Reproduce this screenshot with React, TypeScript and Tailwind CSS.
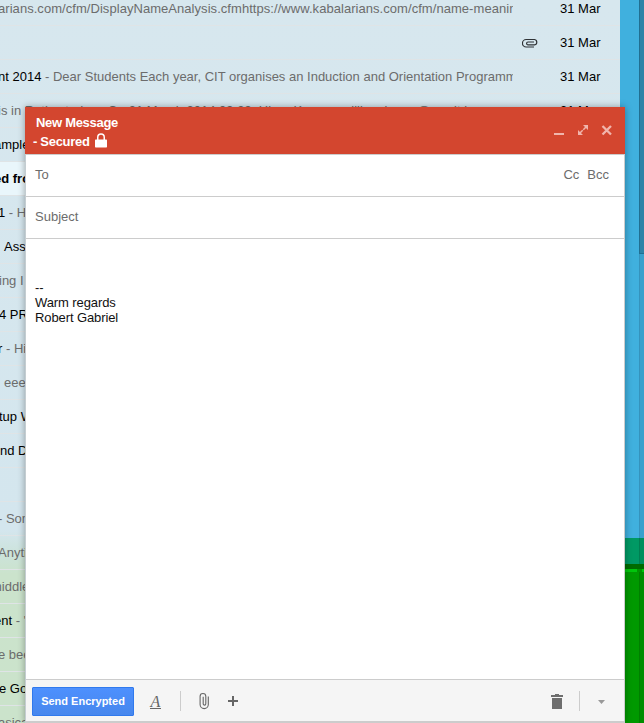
import type { ReactNode } from 'react';

type Row = { left: ReactNode; date?: boolean; clip?: boolean; unread?: boolean; shift: string };

const rows: Row[] = [
  { left: 'arians.com/cfm/DisplayNameAnalysis.cfmhttps://www.kabalarians.com/cfm/name-meaning', date: true, shift: '-ml-[2px] tracking-[0.05px]' },
  { left: '', date: true, clip: true, shift: '' },
  { left: <><b className="font-normal text-black">nt 2014</b> - Dear Students Each year, CIT organises an Induction and Orientation Programme</>, date: true, shift: '-ml-[2px]' },
  { left: 'is in Rathcstudsm. On 31 March 2014 09:39, Hiran Kansar  william.byrne@mycit.ie', date: true, shift: '-ml-[2px]' },
  { left: <b className="font-normal text-black">ample</b>, shift: '-ml-[6px]' },
  { left: <b className="text-black">ed from</b>, unread: true, shift: '-ml-[6px]' },
  { left: <><b className="font-normal text-black">1</b> - Hi</>, shift: '-ml-[2px]' },
  { left: <b className="font-normal text-black">Assign</b>, shift: 'ml-[4px]' },
  { left: 'ing I', shift: '-ml-[1px]' },
  { left: <b className="font-normal text-black">4 PRO</b>, shift: '-ml-[1px]' },
  { left: <><b className="font-normal text-black">r</b> - Hi</>, shift: '-ml-[2px]' },
  { left: 'eeee', shift: 'ml-[4px]' },
  { left: <b className="font-normal text-black">tup W</b>, shift: '-ml-[1px]' },
  { left: <b className="font-normal text-black">nd De</b>, shift: 'ml-0' },
  { left: '', shift: '' },
  { left: '- Som', shift: '-ml-[2px]' },
  { left: 'Anyti', shift: '-ml-[2px]' },
  { left: 'middle', shift: '-ml-[9px]' },
  { left: <><b className="font-normal text-black">ent</b> - "</>, shift: '-ml-[6px]' },
  { left: 'e been', shift: '-ml-[2px]' },
  { left: <b className="font-normal text-black">e Goo</b>, shift: '-ml-[1px]' },
  { left: 'asical', shift: '-ml-[2px]' },
];

export default function App() {
  return (
    <div className="relative h-[723px] w-[644px] overflow-hidden font-['Liberation_Sans',Arial,sans-serif] text-[13px] text-[#6c6c6c]">
      <div className="flex h-full">
        <div className="h-full w-[620px] overflow-hidden bg-[linear-gradient(#d7e7ee_0px,#d4e6ee_530px,#cce3dc_552px,#cbe3cc_574px,#cbe3cb_723px)]">
          <div className="-mt-2">
            {rows.map((r, i) => (
              <div key={i} className={`flex h-[34px] items-center border-b border-[#dfe4e6] whitespace-pre ${r.unread ? 'bg-[#e9f6fb]' : ''}`}>
                <div className="w-[513px] overflow-hidden leading-[18px]"><div className={r.shift}>{r.left}</div></div>
                <div className="flex w-[47px] items-center pt-px pl-[9px]">{r.clip && <Clip />}</div>
                {r.date && <div className="text-black">31 Mar</div>}
              </div>
            ))}
          </div>
        </div>
        <div className="flex h-full w-6 flex-col">
          <div className="flex h-[538px] bg-[#40b0de]">
            <div className="w-[19px]" />
            <div className="flex w-[5px] flex-col">
              <div className="h-[254px] border-b border-l border-[#216f91] bg-[#2d83a7]" />
              <div className="flex-1 border-l border-[#3593bd] bg-[#39a1cd]" />
            </div>
          </div>
          <div className="flex h-[26px] bg-[#009964] pl-[19px]"><div className="flex-1 border-l border-[#007f52] bg-[#008f5d]" /></div>
          <div className="h-[5px] bg-[#006c00]" />
          <div className="flex h-[3px] bg-[#00c60c]"><div className="ml-[17px] w-[5px] bg-[#009400]" /></div>
          <div className="flex flex-1 bg-[#009900] pl-[19px]"><div className="flex-1 border-l border-[#007f00] bg-[#008d00]" /></div>
        </div>
      </div>
      <section className="absolute top-[107px] left-[25px] flex h-[616px] w-[600px] flex-col shadow-[0_0_7px_rgba(0,0,0,0.35)]">
        <header className="flex h-[47px] bg-[#d3462f] text-white">
          <div className="flex-1 pt-[6px] font-bold leading-[19px] tracking-[-0.3px]">
            <div className="pl-[11px]">New Message</div>
            <div className="flex pl-2">- Secured <Lock /></div>
          </div>
          <Controls />
        </header>
        <div className="flex flex-1 flex-col border-x border-t border-r-[#ccc] border-l-[#c4cdd1] border-t-[#ccc] bg-white">
          <div className="flex h-[42px] justify-between border-b border-[#ccc] pt-[11px] pr-[15px] pl-[9px] leading-[17px]">
            <span>To</span><span className="flex gap-2"><span>Cc</span><span>Bcc</span></span>
          </div>
          <div className="h-[42px] border-b border-[#ccc] pt-[11px] pl-[9px] leading-[17px]">Subject</div>
          <div className="flex-1 pt-[41px] pl-[9px] leading-[15px] tracking-[-0.1px] text-[#111]">
            <div>--</div><div>Warm regards</div><div>Robert Gabriel</div>
          </div>
          <footer className="flex h-[44px] items-start border-t border-b-2 border-[#ccc] bg-[#f5f5f5] pt-[7px] pl-[6px]">
            <button className="h-[29px] w-[102px] rounded-[1px] border border-[#3079ed] bg-linear-to-b from-[#4d90fe] to-[#4787ed] text-[11px] font-bold whitespace-nowrap text-white">Send Encrypted</button>
            <FooterIcons />
            <Trash />
          </footer>
        </div>
      </section>
    </div>
  );
}

function Clip() {
  return <svg width="16" height="10" viewBox="0 0 16 10" fill="none" stroke="#2f3336" strokeWidth="1.2"><path d="M12 9H4.200a3.600 3.600 0 0 1 0-7.500h8.400a2.700 2.700 0 0 1 0 5.300H6a1.400 1.400 0 0 1 0-2.800H12" /></svg>;
}
function Lock() {
  return <svg className="mt-px ml-[5px]" width="12" height="15" viewBox="0 0 12 15"><path d="M2.750 7V4.250a3.250 3.250 0 0 1 6.500 0V7" fill="none" stroke="#fff" strokeWidth="1.500" /><rect y="6.500" width="12" height="8" rx="0.700" fill="#fff" /></svg>;
}
function Controls() {
  return (
    <svg width="72" height="47" viewBox="0 0 72 47" stroke="#f0b5ac" fill="none">
      <path d="M1 27h10" strokeWidth="2" />
      <path d="M26.500 26.500L29.700 23.300M33.500 19.500L30.300 22.700" strokeWidth="1.500" />
      <path d="M30 18h5v5zM25 23v5h5z" fill="#f0b5ac" stroke="none" />
      <path d="M49.500 19l8.500 8.500M58 19l-8.500 8.500" strokeWidth="2.300" />
    </svg>
  );
}
function FooterIcons() {
  return (
    <svg width="110" height="34" viewBox="134 687 110 34" fill="none" stroke="#666">
      <text x="150.500" y="706.500" fontSize="16" fontStyle="italic" fontFamily="Liberation Serif, serif" fill="#666" stroke="none">A</text>
      <path d="M150 708.500h11" />
      <path d="M180.500 691v20" stroke="#ccc" />
      <path d="M208.300 696.500v8a4 4 0 0 1-8.200 0v-8.200a2.800 2.800 0 0 1 5.700 0v7.500a1.300 1.300 0 0 1-2.600 0v-7" strokeWidth="1.100" />
      <path d="M228 701h10M233 696v10" strokeWidth="2" />
    </svg>
  );
}
function Trash() {
  return (
    <svg className="ml-auto" width="78" height="34" viewBox="545 687 78 34" fill="#6e6e6e">
      <path d="M550 695h4v-1h4v1h4v2h-12zM551 698h10v11h-10z" />
      <path d="M578 691h1v20h-1z" fill="#ccc" />
      <path d="M597 700h7l-3.500 4z" fill="#999" />
    </svg>
  );
}
